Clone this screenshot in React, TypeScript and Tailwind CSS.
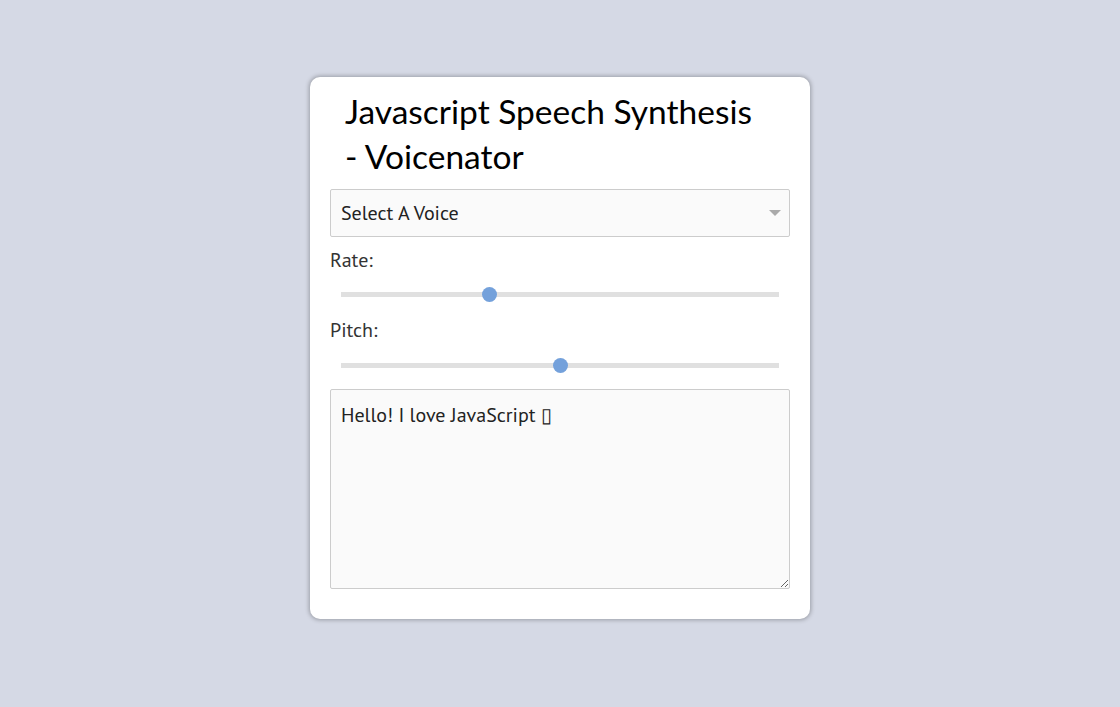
import { useState } from "react";

const rangeClass =
  "w-full h-[5px] appearance-none bg-[#e0e0e0] rounded-none outline-none cursor-pointer [&::-webkit-slider-thumb]:appearance-none [&::-webkit-slider-thumb]:w-[15px] [&::-webkit-slider-thumb]:h-[15px] [&::-webkit-slider-thumb]:rounded-full [&::-webkit-slider-thumb]:bg-[#74a1db] [&::-webkit-slider-thumb]:border-0";

export default function App() {
  const [rate, setRate] = useState(1);
  const [pitch, setPitch] = useState(1);
  const [text, setText] = useState("Hello! I love JavaScript ▯");

  return (
    <div
      className="min-h-screen w-full bg-[#d5d9e5] flex justify-center pt-[77px]"
      style={{ fontFamily: '"PT Sans", Lato, "Noto Sans", sans-serif' }}
    >
      <div className="w-[500px] h-[542px] bg-white rounded-[10px] shadow-[0_0_4px_1px_rgba(0,0,0,0.28)] px-5 pt-[12px] pb-[30px] flex flex-col">
        {/* Titulo */}
        <h1
          className="text-[33.5px] leading-[45px] text-black pl-[15px] pr-[20px] mb-[10px] font-normal"
          style={{ fontFamily: 'Lato, "Open Sans", sans-serif' }}
        >
          Javascript Speech Synthesis - Voicenator
        </h1>

        {/* Voces */}
        <div className="relative">
          <select className="w-full h-12 appearance-none bg-[#fafafa] border border-[#cccccc] rounded-[2px] px-[10px] text-[20px] text-[#222] outline-none">
            <option>Select A Voice</option>
          </select>
          <span className="absolute right-[9px] top-[21px] w-0 h-0 border-l-[6px] border-r-[6px] border-t-[6px] border-l-transparent border-r-transparent border-t-[#aaaaaa] pointer-events-none" />
        </div>

        <label className="text-[20px] text-[#333] mt-[11px] leading-[24px]">Rate:</label>
        <div className="px-[11px] h-[45px] flex items-center">
          <input
            type="range"
            min={0.5}
            max={2}
            step={0.1}
            value={rate}
            onChange={(e) => setRate(Number(e.target.value))}
            className={rangeClass}
          />
        </div>

        <label className="text-[20px] text-[#333] leading-[24px] mt-[1px]">Pitch:</label>
        <div className="px-[11px] h-[46px] flex items-center">
          <input
            type="range"
            min={0}
            max={2}
            step={0.1}
            value={pitch}
            onChange={(e) => setPitch(Number(e.target.value))}
            className={rangeClass}
          />
        </div>

        {/* Texto */}
        <textarea
          value={text}
          onChange={(e) => setText(e.target.value)}
          className="mt-[1px] w-full h-[200px] bg-[#fafafa] border border-[#cccccc] rounded-[2px] px-[10px] py-[10px] text-[20px] text-[#222] outline-none resize-y"
        />
      </div>
    </div>
  );
}
